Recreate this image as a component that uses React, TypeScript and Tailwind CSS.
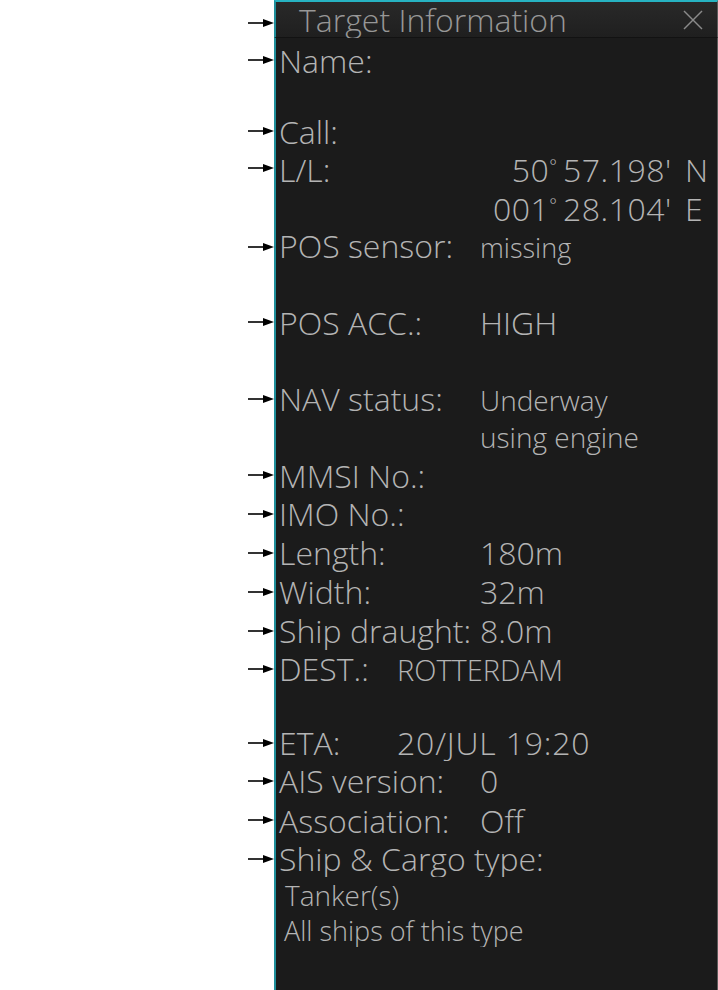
import type { ReactNode } from 'react'

function Arrow() {
  return (
    <svg width="26" height="10" viewBox="0 0 26 10">
      <line x1="0" y1="5" x2="17" y2="5" stroke="#000" strokeWidth="1.6" />
      <polygon points="15,1 26,5 15,9" fill="#000" />
    </svg>
  )
}

function Row({
  h,
  arrow,
  children,
}: {
  h: string
  arrow?: boolean
  children?: ReactNode
}) {
  return (
    <div className={`flex ${h}`}>
      <div className="w-[274px] shrink-0 flex items-center justify-end">
        {arrow && <Arrow />}
      </div>
      <div className="flex-1 flex items-center bg-[#1b1b1b] border-l-2 border-l-[#1f8f9b] border-r border-r-[#5b5b5b] pl-[3px] whitespace-nowrap">
        {children}
      </div>
    </div>
  )
}

function Field({
  label,
  value,
  valueSize = 'text-[32px]',
  labelWidth = 'w-[201px]',
}: {
  label: string
  value?: string
  valueSize?: string
  labelWidth?: string
}) {
  return (
    <div className="flex items-baseline">
      <span className={`${labelWidth} shrink-0 text-[32px]`}>{label}</span>
      {value && <span className={valueSize}>{value}</span>}
    </div>
  )
}

function LatLon({
  label,
  deg,
  min,
  hemi,
}: {
  label: string
  deg: string
  min: string
  hemi: string
}) {
  return (
    <div className="flex items-baseline text-[32px]">
      <span className="w-[201px] shrink-0">{label}</span>
      <span className="w-[77px] shrink-0 text-right tracking-[0.5px]">
        {deg}
        <span className="text-[18px] align-[9px] tracking-normal">°</span>
      </span>
      <span className="w-[110px] shrink-0 pl-[6px] tracking-[0.5px]">{min}</span>
      <span className="pl-[18px]">{hemi}</span>
    </div>
  )
}

export default function App() {
  return (
    <div className="min-h-screen bg-white">
      <div className="w-[718px] h-[990px] flex flex-col font-['Open_Sans','Noto_Sans',sans-serif] font-light leading-[33px] text-[#b4b4b4]">
        {/* Title bar */}
        <div className="flex h-[38px] shrink-0">
          <div className="w-[274px] shrink-0 flex items-center justify-end pt-[8px]">
            <Arrow />
          </div>
          <div className="flex-1 flex items-center justify-between bg-linear-to-b from-[#292929] to-[#1f1f1f] border-t-2 border-t-[#27b3c2] border-l-2 border-l-[#1f8f9b] border-r border-r-[#5b5b5b] border-b border-b-[#121212] pl-[23px] pr-[14px]">
            <span className="text-[32px] leading-[33px] text-[#979797]">
              Target Information
            </span>
            <svg width="20" height="20" viewBox="0 0 20 20">
              <line x1="1" y1="1" x2="19" y2="19" stroke="#8a8a8a" strokeWidth="1.5" />
              <line x1="19" y1="1" x2="1" y2="19" stroke="#8a8a8a" strokeWidth="1.5" />
            </svg>
          </div>
        </div>

        <Row h="h-[4px]" />
        <Row h="h-[36px]" arrow>
          <Field label="Name:" />
        </Row>
        <Row h="h-[35px]" />
        <Row h="h-[36px]" arrow>
          <Field label="Call:" />
        </Row>
        <Row h="h-[38px]" arrow>
          <LatLon label="L/L:" deg="50" min="57.198'" hemi="N" />
        </Row>
        <Row h="h-[40px]">
          <LatLon label="" deg="001" min="28.104'" hemi="E" />
        </Row>
        <Row h="h-[39px]" arrow>
          <Field label="POS sensor:" value="missing" valueSize="text-[27px]" />
        </Row>
        <Row h="h-[37px]" />
        <Row h="h-[38px]" arrow>
          <Field label="POS ACC.:" value="HIGH" />
        </Row>
        <Row h="h-[39px]" />
        <Row h="h-[38px]" arrow>
          <Field label="NAV status:" value="Underway" valueSize="text-[28px]" />
        </Row>
        <Row h="h-[38px]">
          <Field label="" value="using engine" valueSize="text-[28px]" />
        </Row>
        <Row h="h-[38px]" arrow>
          <Field label="MMSI No.:" />
        </Row>
        <Row h="h-[39px]" arrow>
          <Field label="IMO No.:" />
        </Row>
        <Row h="h-[39px]" arrow>
          <Field label="Length:" value="180m" />
        </Row>
        <Row h="h-[39px]" arrow>
          <Field label="Width:" value="32m" />
        </Row>
        <Row h="h-[39px]" arrow>
          <Field label="Ship draught:" value="8.0m" />
        </Row>
        <Row h="h-[37px]" arrow>
          <Field
            label="DEST.:"
            value="ROTTERDAM"
            valueSize="text-[29px]"
            labelWidth="w-[118px]"
          />
        </Row>
        <Row h="h-[37px]" />
        <Row h="h-[37px]" arrow>
          <Field
            label="ETA:"
            value="20/JUL 19:20"
            valueSize="text-[32px] tracking-[0.8px]"
            labelWidth="w-[118px]"
          />
        </Row>
        <Row h="h-[39px]" arrow>
          <Field label="AIS version:" value="0" />
        </Row>
        <Row h="h-[40px]" arrow>
          <Field label="Association:" value="Off" />
        </Row>
        <Row h="h-[37px]" arrow>
          <span className="text-[32px]">Ship &amp; Cargo type:</span>
        </Row>
        <Row h="h-[36px]">
          <span className="pl-[6px] text-[28px]">Tanker(s)</span>
        </Row>
        <Row h="h-[34px]">
          <span className="pl-[5px] text-[27px]">All ships of this type</span>
        </Row>
        <Row h="flex-1" />
      </div>
    </div>
  )
}
